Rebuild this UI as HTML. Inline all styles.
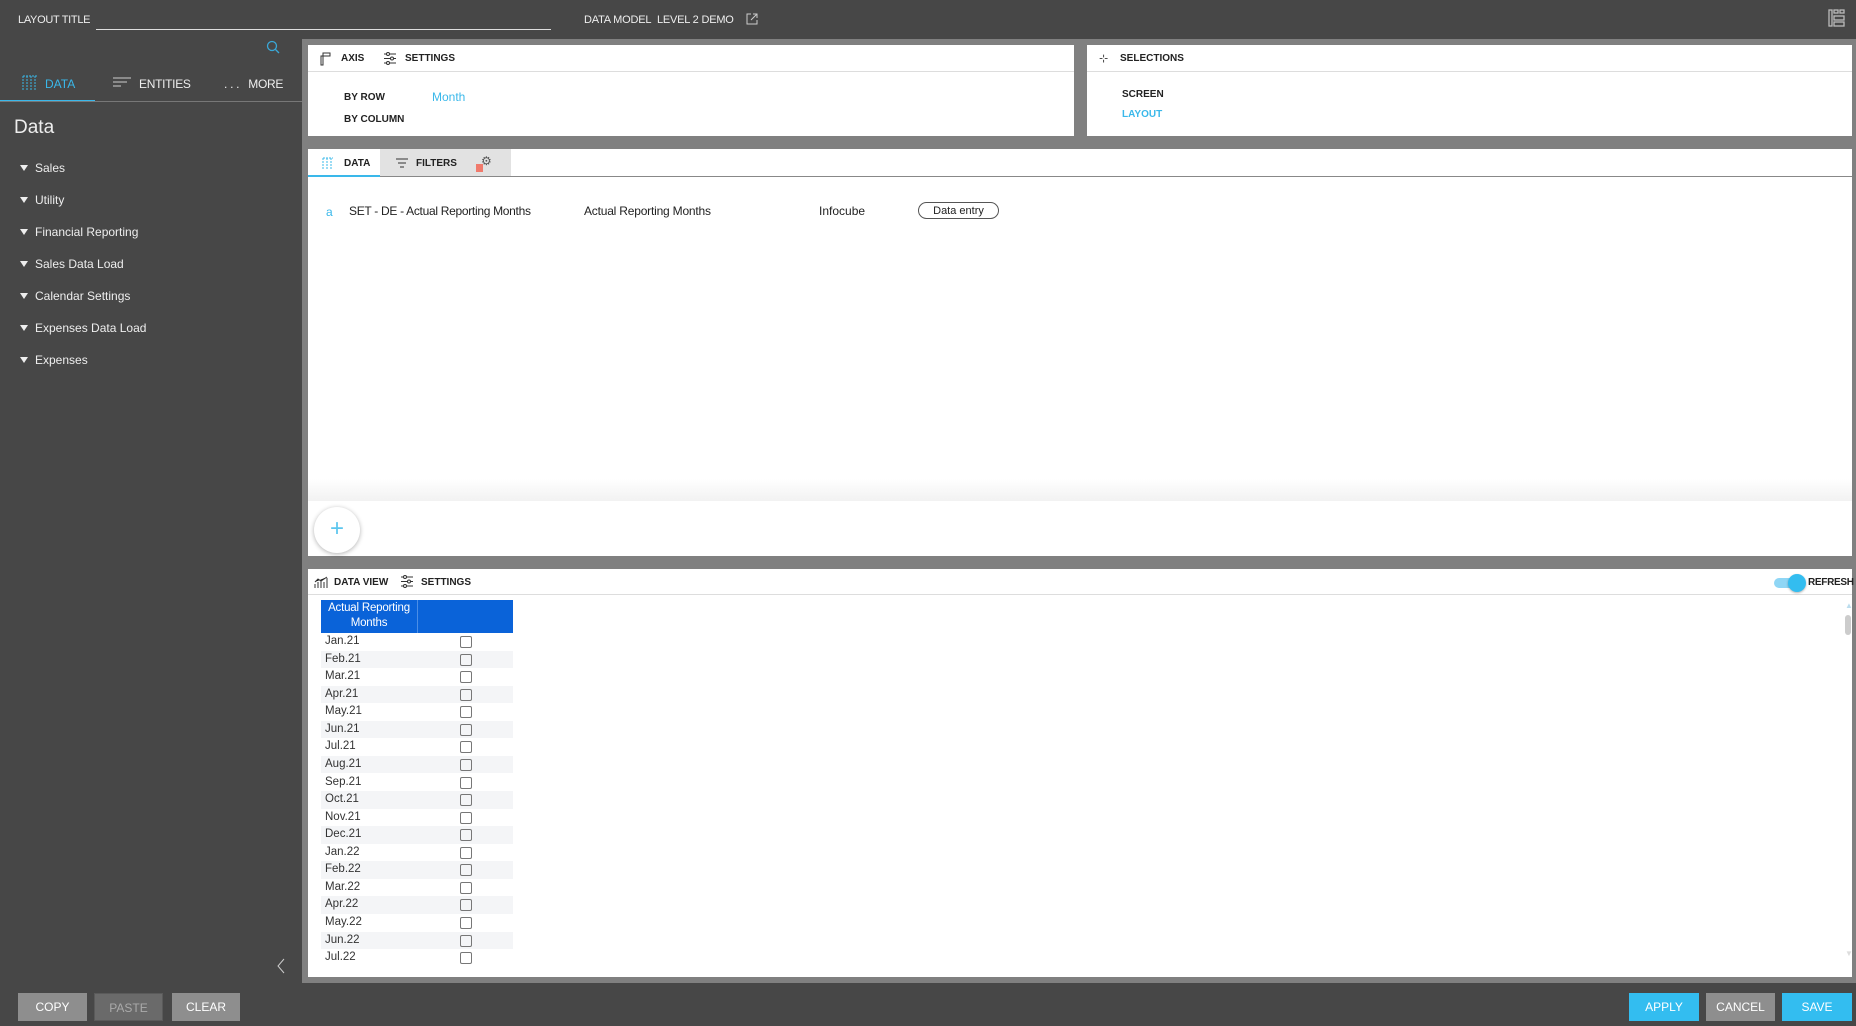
<!DOCTYPE html>
<html><head><meta charset="utf-8"><style>
*{box-sizing:border-box;margin:0;padding:0}
body{width:1856px;height:1026px;background:#474747;font-family:"Liberation Sans",sans-serif;position:relative;overflow:hidden;color:#222}
.a{position:absolute}
.w{color:#eee}
.lbl{font-size:10px;font-weight:bold;color:#222}
.panel{position:absolute;background:#fff}
.btn{position:absolute;top:993px;height:28px;color:#fff;font-size:12px;text-align:center;line-height:28px}
.row{position:absolute;left:321px;width:192px;height:17.56px;font-size:11.5px;line-height:17.56px;padding-left:4px;color:#333}
.row i{position:absolute;left:139px;top:3px;width:12px;height:12px;border:1px solid #777;border-radius:2px}
.tree{position:absolute;left:20px;font-size:12px;color:#eee}
.tree:before{content:"";display:inline-block;border-left:4px solid transparent;border-right:4px solid transparent;border-top:6px solid #eee;margin-right:7px;vertical-align:1px}
</style></head><body>
<!-- top bar -->
<div class="a w" style="left:18px;top:14px;font-size:11px;letter-spacing:-0.3px">LAYOUT TITLE</div>
<div class="a" style="left:96px;top:29px;width:455px;height:1px;background:#ddd"></div>
<div class="a w" style="left:584px;top:14px;font-size:11px;letter-spacing:-0.2px">DATA MODEL&nbsp; LEVEL 2 DEMO</div>
<svg class="a" style="left:746px;top:13px" width="12" height="12" viewBox="0 0 12 12" fill="none" stroke="#ccc"><path d="M5 1H1v10h10V7M7 1h4v4M11 1L5 7"/></svg>
<svg class="a" style="left:1828px;top:9px" width="18" height="18" viewBox="0 0 18 18" fill="none" stroke="#bbb" stroke-width="1.3"><rect x="1" y="1" width="3" height="16"/><rect x="6" y="1" width="4" height="3"/><rect x="12" y="1" width="4" height="3"/><rect x="6" y="7" width="10" height="4"/><rect x="6" y="13" width="10" height="4"/></svg>
<!-- sidebar -->
<svg class="a" style="left:266px;top:40px" width="14" height="14" viewBox="0 0 14 14" fill="none" stroke="#3aa8d8" stroke-width="1.3"><circle cx="6" cy="6" r="4.5"/><path d="M9.5 9.5L13 13"/></svg>
<svg class="a" style="left:22px;top:75px" width="16" height="16" viewBox="0 0 16 16" fill="none" stroke="#3ab8ea" stroke-dasharray="2 1"><path d="M1 1v14M5 1v14M9 1v14M13 1v14M1 1h14"/></svg>
<div class="a" style="left:45px;top:77px;font-size:12px;color:#3ab8ea">DATA</div>
<div class="a" style="left:0;top:100px;width:95px;height:2px;background:#3ab8ea"></div>
<div class="a" style="left:0;top:101px;width:302px;height:1px;background:#777"></div>
<svg class="a" style="left:113px;top:77px" width="18" height="12" stroke="#ccc"><path d="M0 1h18M0 5h14M0 9h8"/></svg>
<div class="a w" style="left:139px;top:77px;font-size:12px;letter-spacing:-0.3px">ENTITIES</div>
<div class="a w" style="left:224px;top:77px;font-size:12px;letter-spacing:-0.3px">. . .&nbsp;&nbsp; MORE</div>
<div class="a w" style="left:14px;top:117px;font-size:19px">Data</div>
<div class="tree" style="top:161px">Sales</div>
<div class="tree" style="top:193px">Utility</div>
<div class="tree" style="top:225px">Financial Reporting</div>
<div class="tree" style="top:257px">Sales Data Load</div>
<div class="tree" style="top:289px">Calendar Settings</div>
<div class="tree" style="top:321px">Expenses Data Load</div>
<div class="tree" style="top:353px">Expenses</div>
<svg class="a" style="left:276px;top:958px" width="10" height="16" fill="none" stroke="#ccc"><path d="M8 1L2 8l6 7"/></svg>
<!-- main gray -->
<div class="a" style="left:302px;top:39px;width:1554px;height:944px;background:#808080"></div>
<!-- axis panel -->
<div class="panel" style="left:308px;top:45px;width:766px;height:91px">
<div class="a" style="left:0;top:26px;width:766px;height:1px;background:#ddd"></div>
<svg class="a" style="left:12px;top:7px" width="12" height="14" fill="none" stroke="#333"><path d="M1 4v9h2V4zM3 1h7v3H3z"/></svg>
<div class="a lbl" style="left:33px;top:8px">AXIS</div>
<svg class="a" style="left:76px;top:7px" width="12" height="13" stroke="#333"><path d="M0 2h12M0 6.5h12M0 11h12"/><circle cx="4" cy="2" r="1.5" fill="#fff"/><circle cx="8" cy="6.5" r="1.5" fill="#fff"/><circle cx="4" cy="11" r="1.5" fill="#fff"/></svg>
<div class="a lbl" style="left:97px;top:8px">SETTINGS</div>
<div class="a lbl" style="left:36px;top:47px">BY ROW</div>
<div class="a" style="left:124px;top:45px;font-size:12px;color:#3ab8ea">Month</div>
<div class="a lbl" style="left:36px;top:69px">BY COLUMN</div>
</div>
<!-- selections -->
<div class="panel" style="left:1087px;top:45px;width:765px;height:91px">
<div class="a" style="left:0;top:26px;width:765px;height:1px;background:#ddd"></div>
<div class="a" style="left:12px;top:7px;font-size:11px;color:#333">⊹</div>
<div class="a lbl" style="left:33px;top:8px">SELECTIONS</div>
<div class="a lbl" style="left:35px;top:44px">SCREEN</div>
<div class="a lbl" style="left:35px;top:64px;color:#3ab8ea">LAYOUT</div>
</div>
<!-- data panel -->
<div class="panel" style="left:308px;top:149px;width:1544px;height:407px">
<div class="a" style="left:72px;top:0;width:131px;height:28px;background:#e2e2e2"></div>
<div class="a" style="left:0;top:27px;width:1544px;height:1px;background:#888"></div>
<div class="a" style="left:0;top:26px;width:72px;height:2px;background:#3ab8ea"></div>
<svg class="a" style="left:14px;top:8px" width="12" height="12" fill="none" stroke="#3ab8ea" stroke-dasharray="2 1"><path d="M1 1v11M5 1v11M9 1v11M1 1h10"/></svg>
<div class="a lbl" style="left:36px;top:9px">DATA</div>
<svg class="a" style="left:88px;top:9px" width="12" height="10" stroke="#333"><path d="M0 1h12M2 5h8M4 9h4"/></svg>
<div class="a lbl" style="left:108px;top:9px">FILTERS</div>
<div class="a" style="left:168px;top:15px;width:7px;height:8px;background:#f07a6c"></div>
<div class="a" style="left:173px;top:5px;font-size:12px;color:#555">⚙</div>
<div class="a" style="left:18px;top:56px;font-size:12px;color:#3ab8ea">a</div>
<div class="a" style="left:41px;top:55px;font-size:12px;letter-spacing:-0.3px">SET - DE - Actual Reporting Months</div>
<div class="a" style="left:276px;top:55px;font-size:12px;letter-spacing:-0.2px">Actual Reporting Months</div>
<div class="a" style="left:511px;top:55px;font-size:12px">Infocube</div>
<div class="a" style="left:610px;top:53px;width:81px;height:17px;border:1px solid #555;border-radius:9px;font-size:11px;text-align:center;line-height:16px">Data entry</div>
<div class="a" style="left:0;top:330px;width:1544px;height:22px;background:linear-gradient(#fff,#f2f2f2)"></div>
<div class="a" style="left:6px;top:358px;width:46px;height:46px;border-radius:50%;background:#fff;box-shadow:0 1px 5px rgba(0,0,0,.3);color:#5cc6ee;font-size:24px;text-align:center;line-height:44px">+</div>
</div>
<!-- data view -->
<div class="panel" style="left:308px;top:569px;width:1544px;height:408px">
<div class="a" style="left:0;top:25px;width:1544px;height:1px;background:#ddd"></div>
<svg class="a" style="left:6px;top:7px" width="14" height="12" stroke="#333"><path d="M1 12V8M4 12V6M7 12V4M10 12V6M13 12V2M1 6l3-3 3 2 6-4"/></svg>
<div class="a lbl" style="left:26px;top:8px">DATA VIEW</div>
<svg class="a" style="left:93px;top:6px" width="12" height="13" stroke="#333"><path d="M0 2h12M0 6.5h12M0 11h12"/><circle cx="4" cy="2" r="1.5" fill="#fff"/><circle cx="8" cy="6.5" r="1.5" fill="#fff"/><circle cx="4" cy="11" r="1.5" fill="#fff"/></svg>
<div class="a lbl" style="left:113px;top:8px">SETTINGS</div>
<div class="a" style="left:1466px;top:9px;width:28px;height:10px;border-radius:5px;background:#8fd6f5"></div>
<div class="a" style="left:1480px;top:5px;width:18px;height:18px;border-radius:50%;background:#33bdf0;box-shadow:0 1px 2px rgba(0,0,0,.3)"></div>
<div class="a lbl" style="left:1500px;top:8px;letter-spacing:-0.3px">REFRESH</div>
<div class="a" style="left:1537px;top:32px;color:#bde;font-size:8px">▲</div>
<div class="a" style="left:1537px;top:46px;width:6px;height:20px;border-radius:3px;background:#ccc"></div>
<div class="a" style="left:1537px;top:380px;color:#ddd;font-size:8px">▼</div>
</div>
<div class="a" style="left:321px;top:600px;width:192px;height:33px;background:#0a63d9"></div>
<div class="a" style="left:417px;top:600px;width:1px;height:33px;background:#4b8ee6"></div>
<div class="a" style="left:321px;top:601px;width:96px;color:#fff;font-size:11.5px;text-align:center;line-height:15px;letter-spacing:-0.2px">Actual Reporting<br>Months</div>
<div class="row" style="top:633px">Jan.21<i></i></div>
<div class="row" style="top:650.6px;background:#f4f5f7">Feb.21<i></i></div>
<div class="row" style="top:668.1px">Mar.21<i></i></div>
<div class="row" style="top:685.7px;background:#f4f5f7">Apr.21<i></i></div>
<div class="row" style="top:703.2px">May.21<i></i></div>
<div class="row" style="top:720.8px;background:#f4f5f7">Jun.21<i></i></div>
<div class="row" style="top:738.4px">Jul.21<i></i></div>
<div class="row" style="top:755.9px;background:#f4f5f7">Aug.21<i></i></div>
<div class="row" style="top:773.5px">Sep.21<i></i></div>
<div class="row" style="top:791px;background:#f4f5f7">Oct.21<i></i></div>
<div class="row" style="top:808.6px">Nov.21<i></i></div>
<div class="row" style="top:826.2px;background:#f4f5f7">Dec.21<i></i></div>
<div class="row" style="top:843.7px">Jan.22<i></i></div>
<div class="row" style="top:861.3px;background:#f4f5f7">Feb.22<i></i></div>
<div class="row" style="top:878.8px">Mar.22<i></i></div>
<div class="row" style="top:896.4px;background:#f4f5f7">Apr.22<i></i></div>
<div class="row" style="top:914px">May.22<i></i></div>
<div class="row" style="top:931.5px;background:#f4f5f7">Jun.22<i></i></div>
<div class="row" style="top:949.1px">Jul.22<i></i></div>
<!-- bottom buttons -->
<div class="btn" style="left:18px;width:69px;background:#8e8e8e">COPY</div>
<div class="btn" style="left:94px;width:69px;background:#6a6a6a;color:#aaa;border:1px solid #5a5a5a">PASTE</div>
<div class="btn" style="left:172px;width:68px;background:#8e8e8e">CLEAR</div>
<div class="btn" style="left:1629px;width:70px;background:#33bdf0">APPLY</div>
<div class="btn" style="left:1706px;width:69px;background:#8e8e8e">CANCEL</div>
<div class="btn" style="left:1782px;width:70px;background:#33bdf0">SAVE</div>
</body></html>
